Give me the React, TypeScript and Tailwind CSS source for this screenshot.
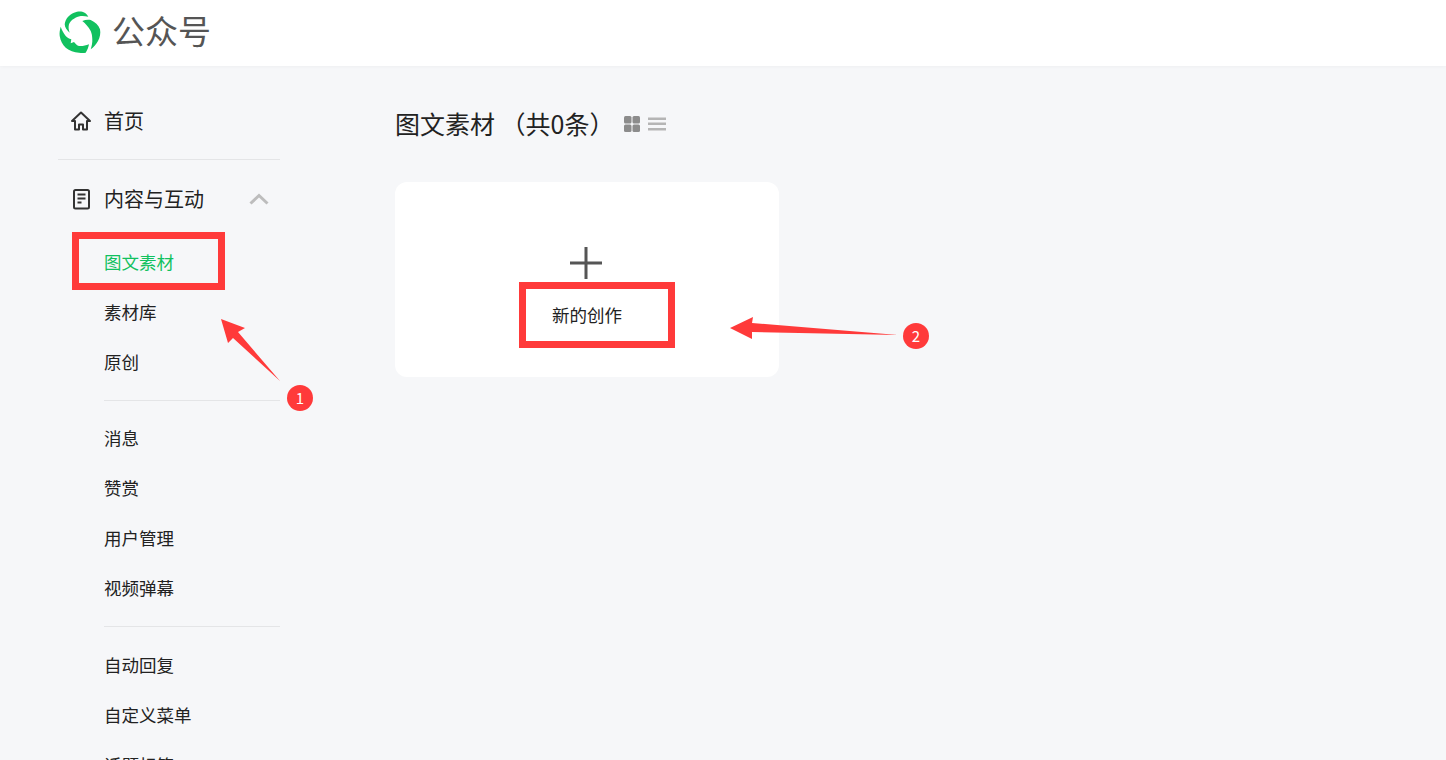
const font = { fontFamily: '"Noto Sans CJK SC", "Noto Sans", sans-serif' };

function Logo() {
  return (
    <svg width="44" height="44" viewBox="0 0 44 44" fill="#11c15f" className="shrink-0">
      <path d="M11.700 23.700C9 21 6.700 18.500 6.700 15.300C7.500 9.500 11.500 5.500 16 3.700C19 2.500 21.500 2.300 24.300 2.700C27 3.300 29 5.300 30.300 7.700C27.500 7 25 6.800 22.700 7C20 7.500 18 8.500 16 9.700C13.500 11 11.800 13 11 15.300C10.300 18 10.500 21 11.700 23.700Z" />
      <path d="M24.300 12C27 10.800 30 10.500 32.700 11C37 13 40.500 16 42 20.300C42.800 24.500 42 28.500 40 32C38 35.500 35.500 38.500 32.700 40.300C33.800 37 34.500 33.500 34.300 30.300C34.200 27 33.800 24.500 32.700 22C30.500 18 27.500 14.500 24.300 12Z" />
      <path d="M2.700 17.700C1.800 21 1.300 24 1.700 27C2.500 32 4.500 35.500 7.700 38.700C11.500 41.800 16 43.300 21 43.700C23.500 44 25.700 44 27.700 43.700C29.500 41 30.500 38 31 35.300C27.500 36.800 24 37.300 21 37C19 36.500 17.500 34.800 16 33L12.700 34.300L13.300 30.300C11 29.500 9 28.500 7.700 27C5.500 24 3.800 21 2.700 17.700Z" />
    </svg>
  );
}

function HomeIcon() {
  return (
    <svg width="22" height="22" viewBox="0 0 22 22" fill="none" stroke="#333" strokeWidth="2" strokeLinejoin="round" className="shrink-0">
      <path d="M2 11 11 2.500 20 11h-3v8.500h-4v-5H9v5H5V11H2Z" />
    </svg>
  );
}

function DocIcon() {
  return (
    <svg width="22" height="22" viewBox="0 0 22 22" fill="none" stroke="#333" strokeWidth="2" className="shrink-0">
      <rect x="4" y="2" width="15" height="18.500" rx="1.500" />
      <path d="M7.500 6.500h8M7.500 10.500h8M7.500 14.500h4" />
    </svg>
  );
}

function Divider({ className }: { className: string }) {
  return <div className={`h-px bg-[#e4e5e7] ${className}`} />;
}

function NavRow({ label, active }: { label: string; active?: boolean }) {
  return (
    <div className={`flex h-[50px] items-center pl-[46px] text-[17.500px] ${active ? "text-[#11c15f]" : "text-[#222]"}`}>
      {label}
    </div>
  );
}

function Sidebar() {
  return (
    <aside className="ml-[58px] w-[222px] shrink-0 pt-[30px]">
      <div className="flex h-[50px] items-center gap-[12px] pl-[12px] text-[20px] text-[#222]">
        <HomeIcon />
        <span>首页</span>
      </div>
      <Divider className="mt-[13px]" />
      <div className="mt-[14px] flex h-[50px] items-center gap-[12px] pl-[12px] text-[20px] text-[#222]">
        <DocIcon />
        <span className="whitespace-nowrap">内容与互动</span>
        <svg width="20" height="12" viewBox="0 0 20 12" fill="none" stroke="#bdbdbd" strokeWidth="3" className="ml-[33px] shrink-0">
          <path d="M1.500 10.500 10 2.500l8.500 8" />
        </svg>
      </div>
      <div className="mt-[13px]">
        <NavRow label="图文素材" active />
        <NavRow label="素材库" />
        <NavRow label="原创" />
      </div>
      <Divider className="ml-[46px] mt-[13px]" />
      <div className="mt-[12px]">
        <NavRow label="消息" />
        <NavRow label="赞赏" />
        <NavRow label="用户管理" />
        <NavRow label="视频弹幕" />
      </div>
      <Divider className="ml-[46px] mt-[13px]" />
      <div className="mt-[13px]">
        <NavRow label="自动回复" />
        <NavRow label="自定义菜单" />
        <NavRow label="话题标签" />
      </div>
    </aside>
  );
}

function Content() {
  return (
    <main className="ml-[115px] w-[384px] pt-[38px]">
      <div className="flex h-[40px] items-center">
        <span className="whitespace-nowrap text-[25px] text-[#222]">图文素材 （共0条）</span>
        <svg width="16" height="16" viewBox="0 0 16 16" fill="#8c8c8c" className="ml-[10px] shrink-0">
          <rect width="7.500" height="7.500" rx="1.500" />
          <rect x="8.500" width="7.500" height="7.500" rx="1.500" />
          <rect y="8.500" width="7.500" height="7.500" rx="1.500" />
          <rect x="8.500" y="8.500" width="7.500" height="7.500" rx="1.500" />
        </svg>
        <svg width="18" height="14" viewBox="0 0 18 14" fill="#b5b5b5" className="ml-[8px] shrink-0">
          <rect y="0.500" width="18" height="2.500" />
          <rect y="5.500" width="18" height="2.500" />
          <rect y="11" width="18" height="2.500" />
        </svg>
      </div>
      <div className="mt-[38px] flex h-[195px] flex-col items-center rounded-[12px] bg-white pt-[65px]">
        <svg width="32" height="32" viewBox="0 0 32 32" fill="#555" className="mr-[2px]">
          <rect x="14.500" width="3" height="32" />
          <rect y="14.500" width="32" height="3" />
        </svg>
        <span className="mt-[23px] text-[17.500px] text-[#222]">新的创作</span>
      </div>
    </main>
  );
}

function Badge({ n, className }: { n: number; className: string }) {
  return (
    <div className={`absolute flex h-[26px] w-[26px] items-center justify-center rounded-full bg-[#ff3a3a] text-[15px] text-white ${className}`}>
      {n}
    </div>
  );
}

export default function App() {
  return (
    <div className="relative h-[760px] w-[1446px] overflow-hidden bg-[#f6f7f9]" style={font}>
      <header className="flex h-[66px] items-center bg-white pb-[4px] pl-[58px] shadow-[0_1px_3px_rgba(0,0,0,0.03)]">
        <Logo />
        <span className="ml-[10px] text-[33px] text-[#555]">公众号</span>
      </header>
      <div className="flex">
        <Sidebar />
        <Content />
      </div>

      {/* 标注 */}
      <div className="absolute left-[72px] top-[232px] h-[58px] w-[153px] border-[7px] border-[#ff3a3a]" />
      <div className="absolute left-[519px] top-[282px] h-[66px] w-[156px] border-[7px] border-[#ff3a3a]" />
      <svg width="1446" height="760" viewBox="0 0 1446 760" fill="#ff3a3a" className="pointer-events-none absolute left-0 top-0">
        <path d="M221 319 245 328 238 332 280 381 233 338 228 343Z" />
        <path d="M730 328 753 317 752 323 898 335 752 332 752 339Z" />
      </svg>
      <Badge n={1} className="left-[287px] top-[385px]" />
      <Badge n={2} className="left-[903px] top-[323px]" />
    </div>
  );
}
